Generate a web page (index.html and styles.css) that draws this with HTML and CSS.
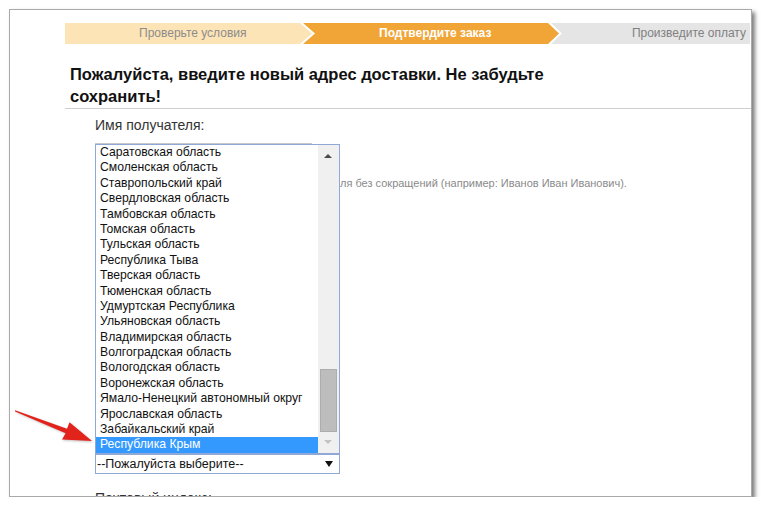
FILE: index.html
```html
<!DOCTYPE html>
<html lang="ru">
<head>
<meta charset="utf-8">
<title>Подтвердите заказ</title>
<link rel="stylesheet" href="styles.css">
</head>
<body>
<div class="window">
  <div class="steps">
    <div class="step step-done">Проверьте условия</div>
    <div class="step step-active">Подтвердите заказ</div>
    <div class="step step-next">Произведите оплату</div>
  </div>

  <h1 class="title">Пожалуйста, введите новый адрес доставки. Не забудьте сохранить!</h1>

  <div class="form">
    <div class="label">Имя получателя:</div>
    <div class="input"></div>
    <div class="hint"><span class="hint-head"><span>Введите фамилию, имя и отчество получате</span></span><span class="hint-tail">ля без сокращений (например: Иванов Иван Иванович).</span></div>

    <div class="region">
      <div class="listbox">
        <ul class="options">
          <li>Саратовская область</li>
          <li>Смоленская область</li>
          <li>Ставропольский край</li>
          <li>Свердловская область</li>
          <li>Тамбовская область</li>
          <li>Томская область</li>
          <li>Тульская область</li>
          <li>Республика Тыва</li>
          <li>Тверская область</li>
          <li>Тюменская область</li>
          <li>Удмуртская Республика</li>
          <li>Ульяновская область</li>
          <li>Владимирская область</li>
          <li>Волгоградская область</li>
          <li>Вологодская область</li>
          <li>Воронежская область</li>
          <li>Ямало-Ненецкий автономный округ</li>
          <li>Ярославская область</li>
          <li>Забайкальский край</li>
          <li class="selected">Республика Крым</li>
        </ul>
        <div class="scrollbar">
          <span class="arrow-up"></span>
          <span class="thumb"></span>
          <span class="arrow-down"></span>
        </div>
      </div>
      <div class="select">--Пожалуйста выберите--<span class="caret"></span></div>
    </div>

    <div class="label label-zip">Почтовый индекс:</div>
  </div>

  <svg class="pointer" width="90" height="60" viewBox="0 0 90 60" aria-hidden="true">
    <polygon points="5,10.2 57,28.8 59.5,22.3 82,41 52,39.5 55.6,33.2 5,11.6" fill="#e2231c"/>
  </svg>
</div>
</body>
</html>
```

FILE: styles.css
```css
* { box-sizing: border-box; }

body {
  margin: 0;
  background: #ffffff;
  font-family: "Liberation Sans", Arial, sans-serif;
  color: #222;
}

.window {
  position: relative;
  margin: 9px 0 0 9px;
  width: 743px;
  height: 488px;
  border: 1px solid #a9a9a9;
  box-shadow: 3px 3px 4px rgba(0, 0, 0, 0.5);
  background: #fff;
  overflow: hidden;
}

/* progress steps */
.steps {
  display: flex;
  margin: 13px 0 0 55px;
  width: 685px;
  height: 21px;
}

.step {
  height: 21px;
  line-height: 21px;
  font-size: 12px;
  white-space: nowrap;
}

.step-done {
  width: 247px;
  padding-left: 74px;
  background: #fde4b7;
  color: #8c8c8c;
  clip-path: polygon(0 0, calc(100% - 12px) 0, 100% 50%, calc(100% - 12px) 100%, 0 100%);
}

.step-active {
  width: 256px;
  margin-left: -9px;
  padding-left: 76px;
  background: #f0a536;
  color: #fff;
  font-weight: bold;
  clip-path: polygon(0 0, calc(100% - 11px) 0, 100% 50%, calc(100% - 11px) 100%, 0 100%, 12px 50%);
}

.step-next {
  flex: 1;
  margin-left: -8px;
  padding-right: 4px;
  text-align: right;
  background: #e5e5e5;
  color: #808080;
  clip-path: polygon(0 0, 100% 0, 100% 100%, 0 100%, 11px 50%);
}

/* heading */
.title {
  margin: 19px 0 0 55px;
  padding: 0 200px 1px 5px;
  border-bottom: 1px solid #cfcfcf;
  font-size: 16.5px;
  line-height: 22px;
  font-weight: bold;
  color: #111;
}

/* form */
.form {
  margin-left: 85px;
}

.label {
  margin-top: 8px;
  font-size: 14px;
  line-height: 17px;
  color: #333;
}

.input {
  margin-top: 9px;
  width: 217px;
  height: 20px;
  border: 1px solid #c9c9c9;
}

.hint {
  display: flex;
  margin-top: 13px;
  font-size: 11px;
  line-height: 14px;
  color: #8a8a8a;
  white-space: nowrap;
}

.hint-head {
  display: flex;
  justify-content: flex-end;
  width: 245px;
  overflow: hidden;
  visibility: hidden;
}

.region {
  position: relative;
  margin-top: 264px;
  width: 245px;
}

.select {
  position: relative;
  height: 20px;
  border: 1px solid #8fa8d6;
  padding-left: 1px;
  font-size: 12.5px;
  line-height: 18px;
  color: #111;
}

.caret {
  position: absolute;
  right: 6px;
  top: 6px;
  width: 0;
  height: 0;
  border-left: 4px solid transparent;
  border-right: 4px solid transparent;
  border-top: 6px solid #111;
}

/* opened dropdown list */
.listbox {
  position: absolute;
  left: 0;
  bottom: 100%;
  width: 245px;
  height: 310px;
  border: 1px solid #8fa8d6;
  background: #fff;
  overflow: hidden;
  z-index: 2;
}

.options {
  list-style: none;
  margin: 0;
  padding: 0;
  width: 222px;
}

.options li {
  height: 15.4px;
  line-height: 15.4px;
  padding-left: 4px;
  font-size: 12.2px;
  color: #111;
  white-space: nowrap;
}

.options li.selected {
  background: #3399ff;
  color: #fff;
}

.scrollbar {
  position: absolute;
  top: 0;
  right: 0;
  bottom: 0;
  width: 21px;
  background: #f0f0f0;
}

.arrow-up {
  position: absolute;
  left: 6px;
  top: 9px;
  width: 0;
  height: 0;
  border-left: 4px solid transparent;
  border-right: 4px solid transparent;
  border-bottom: 4px solid #4a4a4a;
}

.arrow-down {
  position: absolute;
  left: 6px;
  bottom: 9px;
  width: 0;
  height: 0;
  border-left: 4px solid transparent;
  border-right: 4px solid transparent;
  border-top: 4px solid #c2c2c2;
}

.thumb {
  position: absolute;
  left: 2px;
  top: 224px;
  width: 17px;
  height: 63px;
  background: #bdbdbd;
  border: 1px solid #adadad;
}

.label-zip {
  margin-top: 16px;
}

/* annotation arrow */
.pointer {
  position: absolute;
  left: 0;
  top: 390px;
  filter: drop-shadow(1px 1px 1px rgba(0, 0, 0, 0.25));
}
```
